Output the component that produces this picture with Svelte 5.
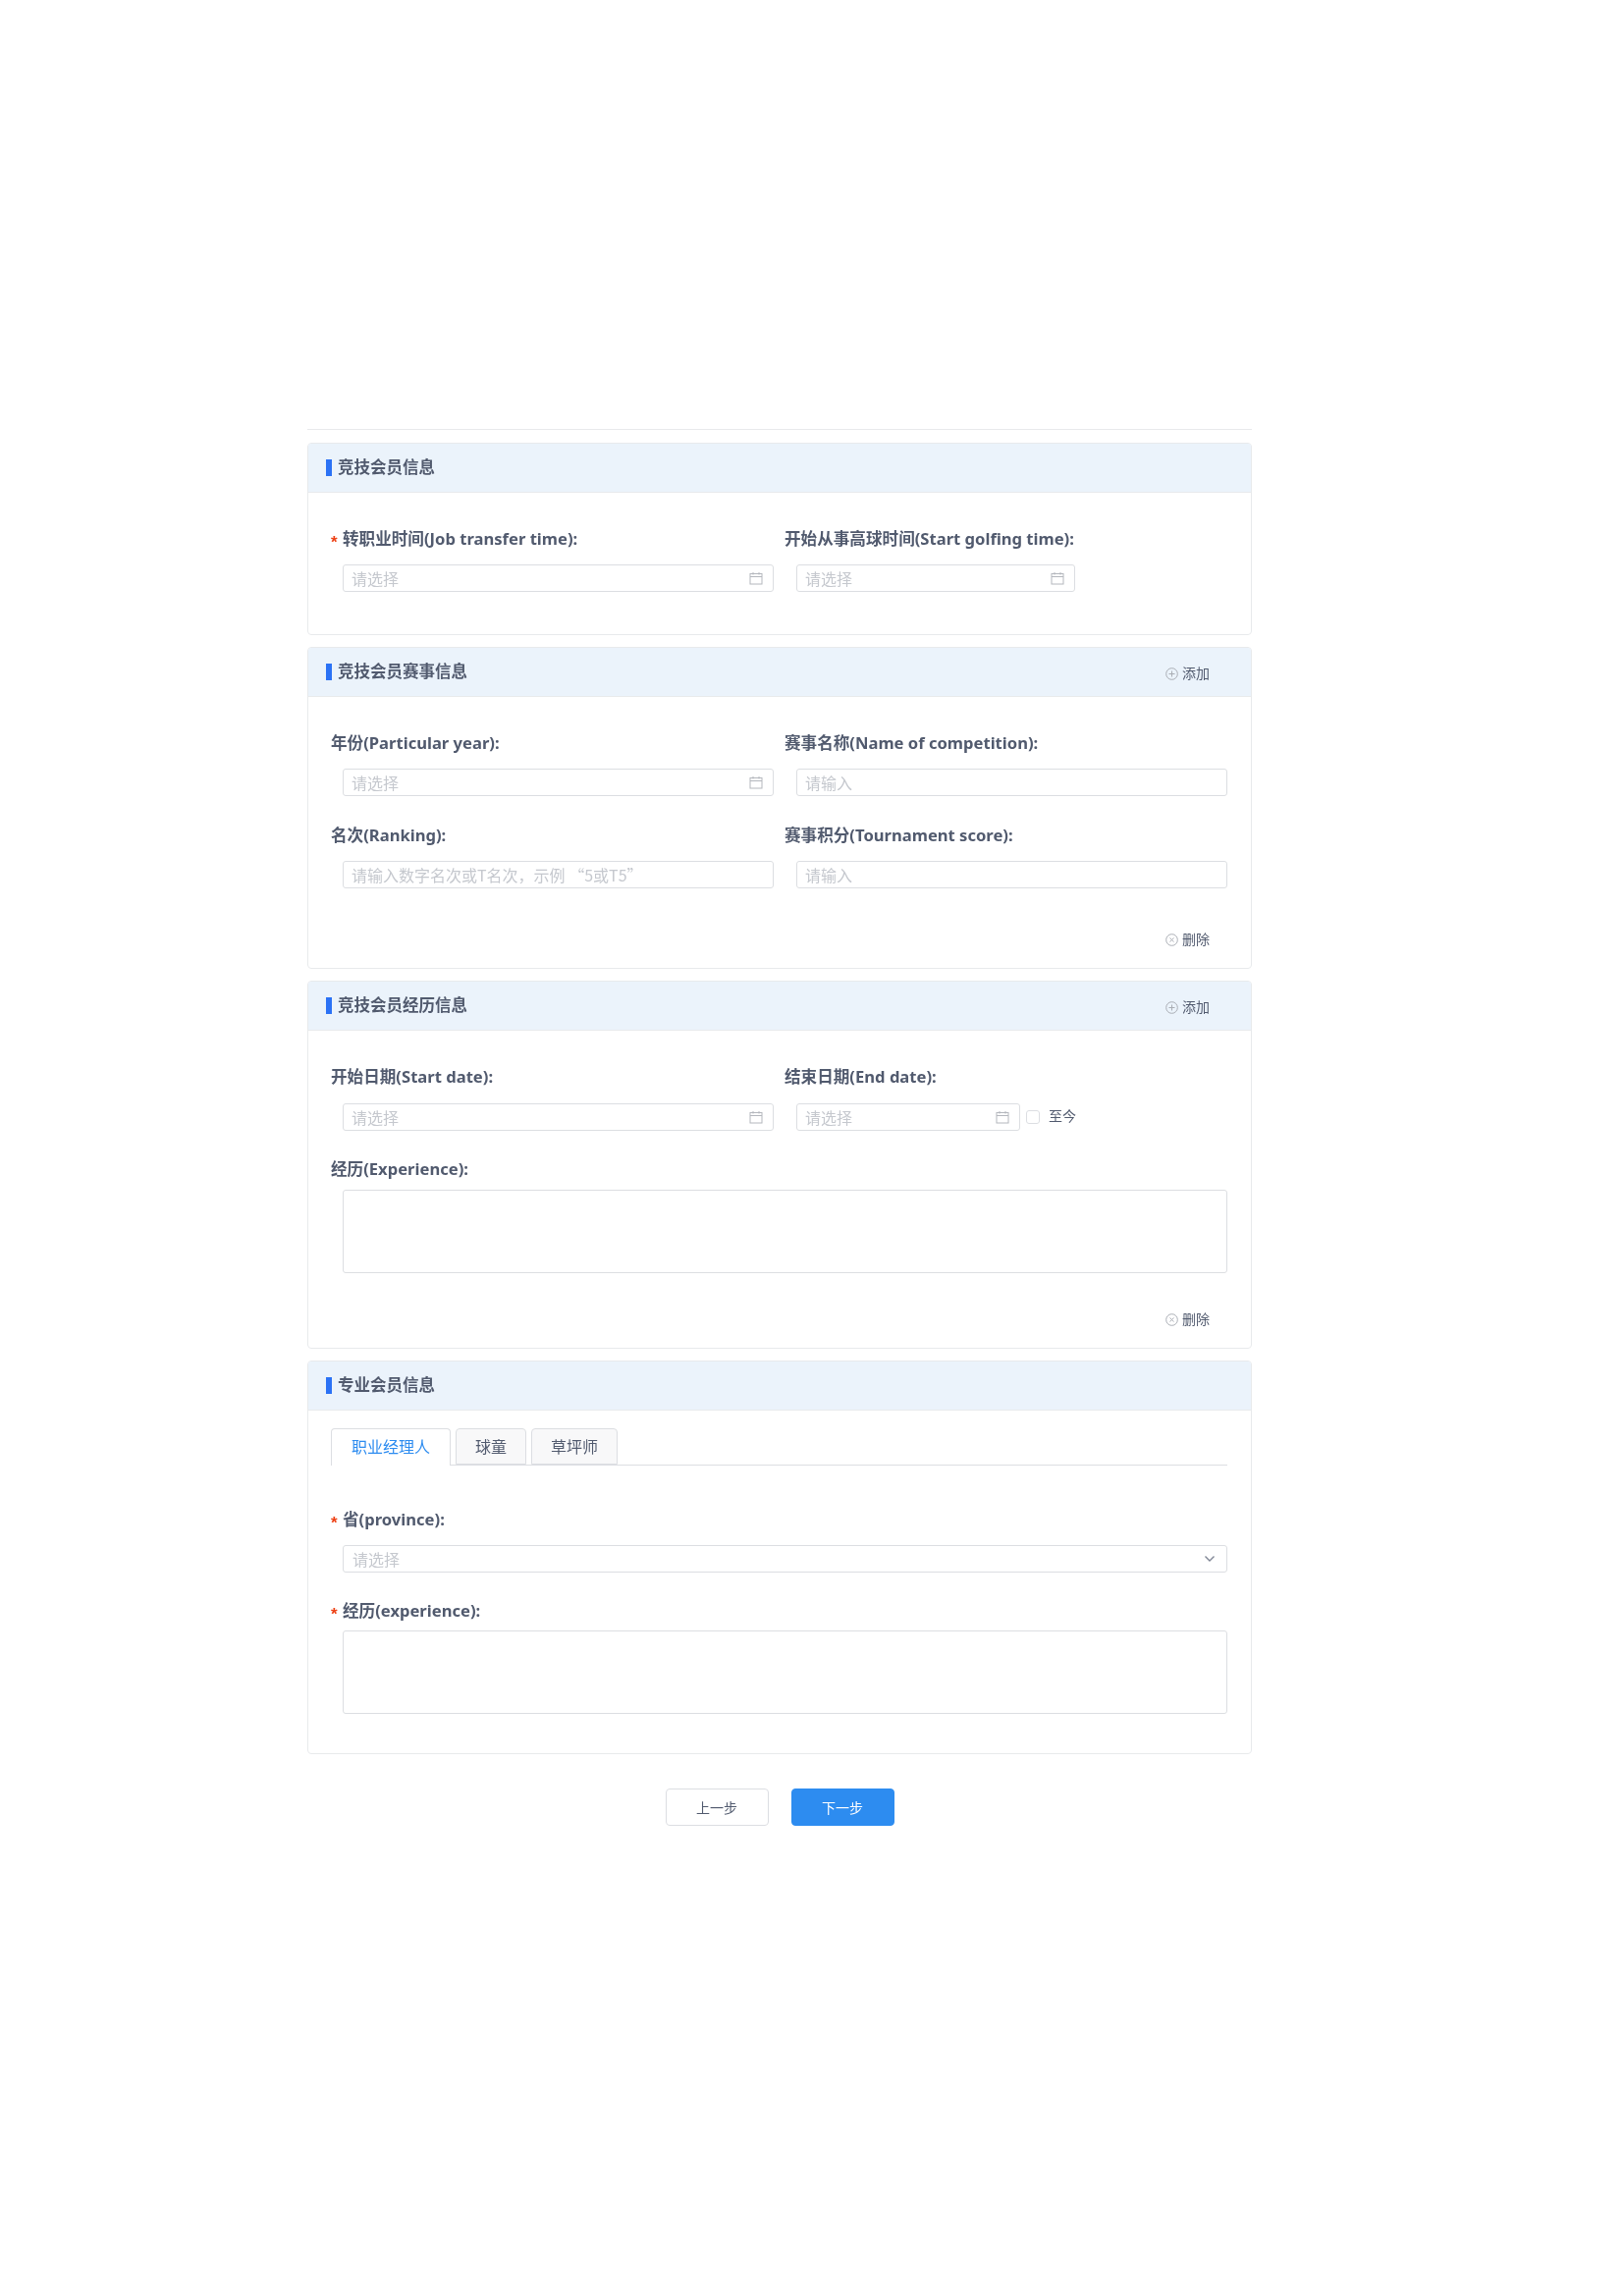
<script>
  const tabs = ['职业经理人', '球童', '草坪师'];
</script>

{#snippet calendar()}
  <svg class="cal" width="14" height="14" viewBox="0 0 14 14" fill="none" stroke="#b4b7bd" stroke-width="1">
    <rect x="1" y="2.5" width="12" height="10.5" />
    <path d="M1 5.5H13M4 1V3.5M10 1V3.5" />
  </svg>
{/snippet}

{#snippet dateInput(cls = '')}
  <div class="date {cls}">
    <input type="text" placeholder="请选择" />
    {@render calendar()}
  </div>
{/snippet}

{#snippet action(kind, text)}
  <span class="action">
    <svg width="13" height="13" viewBox="0 0 13 13" fill="none" stroke="#a9adb4" stroke-width="1">
      <circle cx="6.5" cy="6.5" r="5.8" />
      {#if kind === 'add'}
        <path d="M3.5 6.5H9.5M6.5 3.5V9.5" />
      {:else}
        <path d="M4.5 4.5L8.5 8.5M8.5 4.5L4.5 8.5" />
      {/if}
    </svg>
    {text}
  </span>
{/snippet}

{#snippet head(title, hasAdd = false)}
  <header class="head">
    <i class="bar"></i>
    <h2>{title}</h2>
    {#if hasAdd}{@render action('add', '添加')}{/if}
  </header>
{/snippet}

{#snippet label(text, required = false)}
  <div class="label">{#if required}<span class="star">*</span>{/if}{text}</div>
{/snippet}

<main class="page">
  <div class="rule"></div>

  <section class="card">
    {@render head('竞技会员信息')}
    <div class="body">
      <div class="grid">
        <div class="field">
          {@render label('转职业时间(Job transfer time):', true)}
          {@render dateInput()}
        </div>
        <div class="field">
          {@render label('开始从事高球时间(Start golfing time):')}
          {@render dateInput('short')}
        </div>
      </div>
    </div>
  </section>

  <section class="card">
    {@render head('竞技会员赛事信息', true)}
    <div class="body">
      <div class="grid">
        <div class="field">
          {@render label('年份(Particular year):')}
          {@render dateInput()}
        </div>
        <div class="field">
          {@render label('赛事名称(Name of competition):')}
          <input type="text" placeholder="请输入" />
        </div>
        <div class="field">
          {@render label('名次(Ranking):')}
          <input type="text" placeholder="请输入数字名次或T名次，示例 “5或T5”" />
        </div>
        <div class="field">
          {@render label('赛事积分(Tournament score):')}
          <input type="text" placeholder="请输入" />
        </div>
      </div>
      <div class="foot">{@render action('del', '删除')}</div>
    </div>
  </section>

  <section class="card">
    {@render head('竞技会员经历信息', true)}
    <div class="body">
      <div class="grid dates">
        <div class="field">
          {@render label('开始日期(Start date):')}
          {@render dateInput()}
        </div>
        <div class="field">
          {@render label('结束日期(End date):')}
          <div class="until">
            {@render dateInput('narrow')}
            <span class="check"></span>
            <span class="until-text">至今</span>
          </div>
        </div>
      </div>
      <div class="field area-field">
        {@render label('经历(Experience):')}
        <textarea></textarea>
      </div>
      <div class="foot">{@render action('del', '删除')}</div>
    </div>
  </section>

  <section class="card">
    {@render head('专业会员信息')}
    <div class="body pro">
      <div class="tabs">
        {#each tabs as tab, i}
          <span class="tab" class:active={i === 0}>{tab}</span>
        {/each}
      </div>
      <div class="field province">
        {@render label('省(province):', true)}
        <div class="date select">
          <input type="text" placeholder="请选择" />
          <svg class="chev" width="12" height="8" viewBox="0 0 12 8" fill="none" stroke="#808695" stroke-width="1.4">
            <path d="M1.5 1.5L6 6L10.5 1.5" />
          </svg>
        </div>
      </div>
      <div class="field area-field last">
        {@render label('经历(experience):', true)}
        <textarea></textarea>
      </div>
    </div>
  </section>

  <div class="buttons">
    <button type="button" class="btn">上一步</button>
    <button type="button" class="btn primary">下一步</button>
  </div>
</main>

<style>
  :global(body) {
    background: #fff;
  }
  .page {
    box-sizing: border-box;
    width: 1275px;
    min-height: 2339px;
    padding: 437px 0 0 313px;
    font-family: "Noto Sans", "Noto Sans CJK SC", sans-serif;
    color: #515a6e;
    filter: blur(0.45px);
  }
  .rule {
    height: 1px;
    background: #e8eaec;
    margin-bottom: 13px;
  }
  .card {
    border: 1px solid #e8eaec;
    border-radius: 4px;
    margin-bottom: 12px;
    overflow: hidden;
  }
  .head {
    box-sizing: border-box;
    display: flex;
    align-items: center;
    height: 50px;
    padding: 0 42px 1px 18px;
    background: #ebf3fb;
    border-bottom: 1px solid #e8eaec;
  }
  .bar {
    width: 6px;
    height: 17px;
    margin-right: 6px;
    background: #2b72f5;
  }
  h2 {
    margin: 0;
    font-size: 16.5px;
    font-weight: 700;
    line-height: 20px;
    color: #515a6e;
    flex: 1;
  }
  .action {
    display: inline-flex;
    align-items: center;
    gap: 4px;
    font-size: 14px;
    line-height: 20px;
    color: #515a6e;
    position: relative;
    top: 2px;
  }
  .body {
    padding: 34px 13px 16px 23px;
  }
  .grid {
    display: grid;
    grid-template-columns: 462px 462px;
  }
  .field {
    padding: 0 11px 27px 0;
    min-width: 0;
  }
  .label {
    height: 26px;
    margin-bottom: 13px;
    font-size: 16.6px;
    font-weight: 700;
    line-height: 26px;
    white-space: nowrap;
    color: #515a6e;
  }
  .dates .label {
    margin-bottom: 14px;
  }
  .dates .field {
    padding-bottom: 26px;
  }
  .province {
    padding-bottom: 26px;
  }
  .star {
    display: inline-block;
    width: 12px;
    color: #ed4014;
    font-family: "Liberation Sans", sans-serif;
    font-size: 17px;
    vertical-align: -3px;
    line-height: 1;
  }
  input {
    display: block;
    box-sizing: border-box;
    width: calc(100% - 12px);
    height: 28px;
    margin-left: 12px;
    padding: 0 8px;
    border: 1px solid #dcdee2;
    border-radius: 3px;
    background: #fff;
    font: 16px "Noto Sans CJK SC", "Noto Sans", sans-serif;
    outline: none;
  }
  input::placeholder {
    color: #c5c8ce;
    opacity: 1;
  }
  .date {
    position: relative;
  }
  .date.short {
    width: 296px;
  }
  .date.narrow {
    width: 240px;
    flex: none;
  }
  .cal {
    position: absolute;
    right: 11px;
    top: 7px;
  }
  .chev {
    position: absolute;
    right: 12px;
    top: 10px;
  }
  .select input {
    padding-left: 9px;
  }
  .until {
    display: flex;
    align-items: center;
  }
  .check {
    box-sizing: border-box;
    width: 14px;
    height: 14px;
    margin: 0 9px 0 6px;
    border: 1px solid #dcdee2;
    border-radius: 3px;
  }
  .until-text {
    font-size: 14px;
    line-height: 20px;
    position: relative;
    top: -1px;
  }
  .area-field {
    padding-bottom: 22px;
  }
  .area-field.last {
    padding-bottom: 0;
  }
  .area-field .label {
    margin-bottom: 8px;
  }
  .area-field.last .label {
    margin-bottom: 7px;
  }
  textarea {
    display: block;
    box-sizing: border-box;
    width: calc(100% - 12px);
    height: 85px;
    margin-left: 12px;
    border: 1px solid #dcdee2;
    border-radius: 3px;
    resize: none;
    outline: none;
    background: #fff;
  }
  .foot {
    display: flex;
    justify-content: flex-end;
    margin-top: 15px;
    padding: 0 29px 3px 0;
  }
  .foot .action {
    top: 0;
  }
  .body.pro {
    padding-top: 18px;
    padding-bottom: 40px;
  }
  .tabs {
    display: flex;
    gap: 5px;
    height: 37px;
    margin: 0 11px 42px 0;
    border-bottom: 1px solid #dcdee2;
  }
  .tab {
    box-sizing: border-box;
    height: 37px;
    padding: 0 19px;
    border: 1px solid #dcdee2;
    border-radius: 4px 4px 0 0;
    background: #f8f8f9;
    font-size: 16px;
    line-height: 36px;
    color: #515a6e;
  }
  .tab.active {
    height: 38px;
    padding: 0 20px;
    background: #fff;
    border-bottom: 0;
    color: #2d8cf0;
  }
  .buttons {
    display: flex;
    justify-content: center;
    gap: 23px;
    margin-top: 35px;
  }
  .btn {
    box-sizing: border-box;
    width: 105px;
    height: 38px;
    border: 1px solid #dcdee2;
    border-radius: 4px;
    background: #fff;
    font: 14px "Noto Sans", "Noto Sans CJK SC", sans-serif;
    color: #515a6e;
  }
  .btn.primary {
    background: #2d8cf0;
    border-color: #2d8cf0;
    color: #fff;
  }
</style>
